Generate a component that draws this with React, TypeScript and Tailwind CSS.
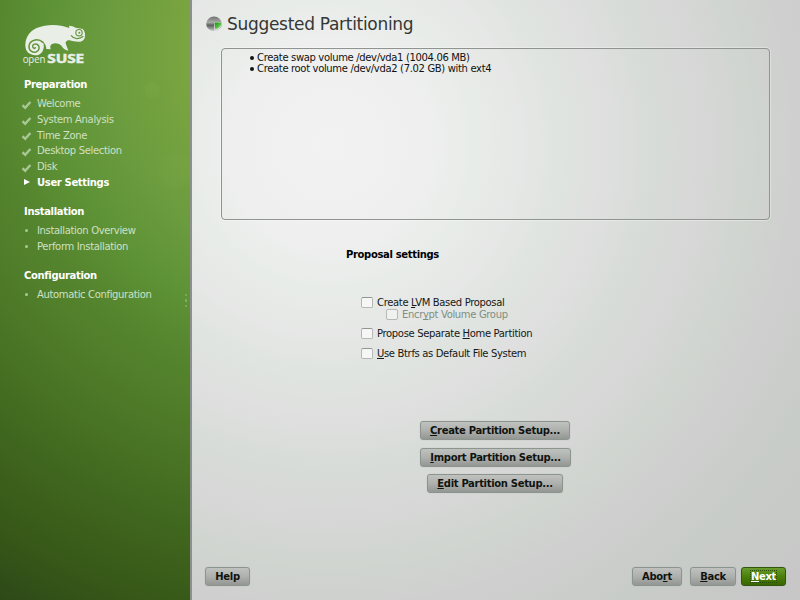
import React from "react";

const steps = ["Welcome", "System Analysis", "Time Zone", "Desktop Selection", "Disk"];

function Logo() {
  return (
    <svg className="ml-[21px] mt-[22px] block h-[44px] w-[68px]" viewBox="63 66 204 132">
      <path
        fill="#e9efe6"
        d="M76 134C77 111 90 93 110 84C133 75 160 73 183 77C194 79 202 82 208 84L207 77C214 77 221 79 227 83L248 87C253 91 256 100 255 108C255 118 249 123 241 125C229 127 218 123 208 121C199 121 195 126 198 133L205 152C194 151 190 145 185 138C178 130 166 128 156 132C149 136 151 144 152 148L139 147C139 139 135 130 128 124C133 133 133 146 127 155C120 166 105 169 93 163C80 157 76 147 76 134Z"
      />
      <path
        fill="none"
        stroke="#63943c"
        strokeWidth="4.5"
        strokeLinecap="round"
        d="M129 127C113 113 89 120 87 138C86 152 98 159 108 156C119 152 120 140 113 134C106 129 97 133 98 140C99 145 104 147 106 143"
      />
      <path fill="none" stroke="#669843" strokeWidth="4" d="M213 106C222 118 238 119 250 109" />
      <circle cx="237" cy="98" r="9.5" fill="none" stroke="#669843" strokeWidth="3.5" />
      <circle cx="238" cy="98" r="3" fill="#669843" />
      <text x="68" y="188" textLength="68" lengthAdjust="spacingAndGlyphs" fill="#e9efe6" fontSize="34" fontFamily="Open Sans, sans-serif">open</text>
      <text x="142" y="188" textLength="110" lengthAdjust="spacingAndGlyphs" fill="#e9efe6" stroke="#e9efe6" strokeWidth="1.5" fontSize="37" fontWeight="700" fontFamily="Open Sans, sans-serif">SUSE</text>
    </svg>
  );
}

function Check() {
  return (
    <svg className="mr-[5px] mt-[2px] h-[10px] w-[10px]" viewBox="0 0 10 10">
      <path d="M0.4 5.2L3.2 7.8L8.4 2" fill="none" stroke="#a9c894" strokeWidth="2.4" />
    </svg>
  );
}

function Heading({ children }: { children: React.ReactNode }) {
  return <h2 className="ml-[24px] h-[16px] leading-[16px] font-bold text-white">{children}</h2>;
}

function Pending({ label }: { label: string }) {
  return (
    <li className="flex h-[15.7px] items-center pl-[25px]">
      <span className="mr-[9px] h-[3px] w-[3px] rounded-full bg-[#a9c894]" />
      {label}
    </li>
  );
}

function Button({ label, hot, className, primary }: { label: string; hot?: number; className: string; primary?: boolean }) {
  const tone = primary
    ? "border-[#31560f] bg-linear-to-b from-[#699c2b] via-[#4b8008] to-[#386500] text-white"
    : "border-[#8b958e] bg-linear-to-b from-[#c0c2c0] via-[#aeb0ae] to-[#939693] text-[#101410]";
  return (
    <button className={`flex h-[19px] items-center justify-center rounded-[3px] border text-[10px] font-bold tracking-[-0.32px] whitespace-pre shadow-[0_0_1px_#a0aaa2] ${tone} ${className}`}>
      <span className={primary ? "outline-1 outline-dotted outline-[#294d0c] leading-[11px]" : "leading-[12px]"}>
        {hot === undefined ? label : <Hot label={label} at={hot} />}
      </span>
    </button>
  );
}

function Hot({ label, at }: { label: string; at: number }) {
  return (
    <>
      {label.slice(0, at)}
      <span className="underline decoration-1 underline-offset-[1px] [text-decoration-skip-ink:none]">{label[at]}</span>
      {label.slice(at + 1)}
    </>
  );
}

function Option({ label, hot, className, disabled }: { label: string; hot: number; className: string; disabled?: boolean }) {
  return (
    <label className={`flex h-[12px] items-center whitespace-pre ${disabled ? "text-[#7f8e81]" : "text-[#151815]"} ${className}`}>
      <span className={`mr-[4px] h-[11px] w-[12px] rounded-[2px] border ${disabled ? "border-[#b4bab4] bg-[#f0f1f0]" : "border-[#b4b9b5] border-t-[#8f9690] bg-[#f5f6f5]"}`} />
      <span><Hot label={label} at={hot} /></span>
    </label>
  );
}

export default function App() {
  return (
    <div className="flex h-[600px] w-[800px] overflow-hidden font-['DejaVu_Sans',sans-serif] text-[10px] tracking-[-0.34px]">
      <aside className="flex w-[190px] shrink-0 flex-col bg-[radial-gradient(circle_9px_at_152px_90px,#8bb45428_0%,#8bb45420_70%,transparent_100%),radial-gradient(circle_20px_at_176px_170px,#8bb45418_0%,#8bb45418_70%,transparent_100%),radial-gradient(circle_650px_at_330px_50px,#7ba63f_0%,#7aa540_22%,#6a9b3e_35%,#5e9236_44%,#55852e_52%,#4e7a28_62%,#41681f_76%,#375818_89%,#2c4718_100%)]">
        <Logo />
        <div className="h-[11px]" />
        <Heading>Preparation</Heading>
        <ul className="mt-[3px] text-[#cfe0c4]">
          {steps.map((step) => (
            <li key={step} className="flex h-[15.7px] items-center pl-[22px]"><Check />{step}</li>
          ))}
          <li className="flex h-[15.7px] items-center pl-[24px] font-bold text-white">
            <svg className="mr-[7px] h-[6px] w-[6px]" viewBox="0 0 6 6"><path d="M0 0L6 3L0 6Z" fill="white" /></svg>
            User Settings
          </li>
        </ul>
        <div className="h-[14px]" />
        <Heading>Installation</Heading>
        <ul className="mt-[3px] text-[#cfe0c4]">
          <Pending label="Installation Overview" />
          <Pending label="Perform Installation" />
        </ul>
        <div className="h-[13px]" />
        <Heading>Configuration</Heading>
        <div className="mt-[3px] flex text-[#cfe0c4]">
          <ul><Pending label="Automatic Configuration" /></ul>
          <div className="mt-[7px] mr-[3px] ml-auto flex flex-col gap-[3px]">
            <i className="size-[2.5px] rounded-full bg-[#86ad69]" />
            <i className="size-[2.5px] rounded-full bg-[#86ad69]" />
            <i className="size-[2.5px] rounded-full bg-[#86ad69]" />
          </div>
        </div>
      </aside>
      <main className="flex w-[610px] flex-col border-l-2 border-[#8d8f8f] bg-[radial-gradient(circle_640px_at_138px_145px,#f2f2f2_0px,#efefef_95px,#e8ece9_145px,#e6e7e6_190px,#dfe4e0_232px,#dfdfdf_275px,#d7dcd8_322px,#d7d7d7_370px,#d0d5d0_420px,#cfcfcf_465px,#c8ccc8_540px,#c7c7c7_640px)]">
        <header className="flex h-[48px] items-center pl-[14px]">
          <svg className="mr-[4px] h-[17px] w-[17px]" viewBox="0 0 17 17">
            <defs>
              <linearGradient id="disk" x1="0" y1="0" x2="0" y2="1">
                <stop offset="0" stopColor="#707270" />
                <stop offset=".4" stopColor="#a9aba9" />
                <stop offset=".6" stopColor="#5c5f5c" />
                <stop offset="1" stopColor="#c8cac8" />
              </linearGradient>
              <linearGradient id="slice" x1="0" y1="0" x2="1" y2="1">
                <stop offset="0" stopColor="#1c8a14" />
                <stop offset="1" stopColor="#7df064" />
              </linearGradient>
            </defs>
            <ellipse cx="8" cy="7.8" rx="7.8" ry="7.3" fill="url(#disk)" />
            <path d="M8.2 6H15.8C16 10.5 13.5 15 8.2 15Z" fill="#d7dbd7" />
            <path d="M8.6 6.5H15.4C15.3 10 13 12.5 9.2 12.9Z" fill="url(#slice)" />
          </svg>
          <h1 className="text-[17px] leading-[20px] tracking-[-0.3px] text-[#343735]">Suggested Partitioning</h1>
        </header>
        <section className="ml-[29px] h-[172px] w-[549px] rounded-[4px] border border-[#8f9490] pt-[3px] text-[#101210] shadow-[0_0_0_1px_#ffffff50]">
          <ul>
            {["Create swap volume /dev/vda1 (1004.06 MB)", "Create root volume /dev/vda2 (7.02 GB) with ext4"].map((line) => (
              <li key={line} className="flex h-[11px] items-center pl-[28px] leading-[11px]">
                <span className="mr-[3px] size-[4px] rounded-full bg-[#101210]" />
                {line}
              </li>
            ))}
          </ul>
        </section>
        <h2 className="mt-[28px] ml-[154px] h-[13px] leading-[13px] font-bold text-black">Proposal settings</h2>
        <div className="mt-[35px] flex flex-col">
          <Option label="Create LVM Based Proposal" hot={7} className="ml-[169px]" />
          <Option label="Encrypt Volume Group" hot={4} className="ml-[194px]" disabled />
          <Option label="Propose Separate Home Partition" hot={17} className="mt-[7px] ml-[169px]" />
          <Option label="Use Btrfs as Default File System" hot={0} className="mt-[8px] ml-[169px]" />
        </div>
        <div className="mt-[62px] ml-[228px] flex w-[151px] flex-col items-start">
          <Button label="Create Partition Setup..." hot={0} className="w-[150px]" />
          <Button label="Import Partition Setup..." hot={0} className="mt-[8px] w-[151px]" />
          <Button label="Edit Partition Setup..." hot={0} className="mt-[7px] ml-[7px] w-[136px]" />
        </div>
        <footer className="mt-auto mb-[14px] flex pl-[13px]">
          <Button label="Help" className="w-[45px]" />
          <Button label="Abort" hot={3} className="ml-[382px] w-[50px]" />
          <Button label="Back" hot={0} className="ml-[8px] w-[46px]" />
          <Button label="Next" hot={0} className="ml-[5px] w-[45px]" primary />
        </footer>
      </main>
    </div>
  );
}
